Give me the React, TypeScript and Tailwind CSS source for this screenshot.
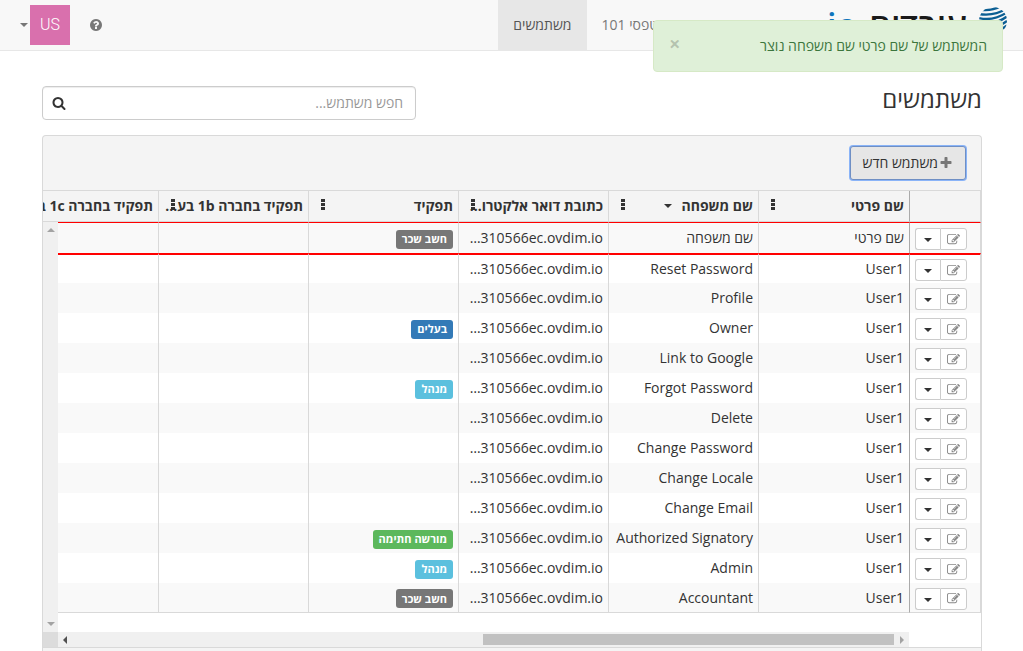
import type { ReactNode } from "react";

type Tone = "gray" | "blue" | "cyan" | "green";

interface Role {
  label: string;
  tone: Tone;
}

interface User {
  first: string;
  last: string;
  role?: Role;
}

const toneClass: Record<Tone, string> = {
  gray: "bg-[#777]",
  blue: "bg-[#337ab7]",
  cyan: "bg-[#5bc0de]",
  green: "bg-[#5cb85c]",
};

const EMAIL = "…310566ec.ovdim.io";

const users: User[] = [
  { first: "שם פרטי", last: "שם משפחה", role: { label: "חשב שכר", tone: "gray" } },
  { first: "User1", last: "Reset Password" },
  { first: "User1", last: "Profile" },
  { first: "User1", last: "Owner", role: { label: "בעלים", tone: "blue" } },
  { first: "User1", last: "Link to Google" },
  { first: "User1", last: "Forgot Password", role: { label: "מנהל", tone: "cyan" } },
  { first: "User1", last: "Delete" },
  { first: "User1", last: "Change Password" },
  { first: "User1", last: "Change Locale" },
  { first: "User1", last: "Change Email" },
  { first: "User1", last: "Authorized Signatory", role: { label: "מורשה חתימה", tone: "green" } },
  { first: "User1", last: "Admin", role: { label: "מנהל", tone: "cyan" } },
  { first: "User1", last: "Accountant", role: { label: "חשב שכר", tone: "gray" } },
];

const columns = [
  { title: "שם פרטי" },
  { title: "שם משפחה", sorted: true },
  { title: "כתובת דואר אלקטרו…" },
  { title: "תפקיד" },
  { title: "תפקיד בחברה 1b בע…" },
  { title: "תפקיד בחברה 1c בע…" },
];

const icons = {
  search:
    "M1216 832q0-185-131.5-316.5t-316.5-131.5-316.5 131.5-131.5 316.5 131.5 316.5 316.5 131.5 316.5-131.5 131.5-316.5zm512 832q0 52-38 90t-90 38q-54 0-90-38l-343-342q-179 124-399 124-143 0-273.5-55.5t-225-150-150-225-55.5-273.5 55.5-273.5 150-225 225-150 273.5-55.5 273.5 55.5 225 150 150 225 55.5 273.5q0 220-124 399l343 343q37 37 37 90z",
  question:
    "M1024 1376v-192q0-14-9-23t-23-9h-192q-14 0-23 9t-9 23v192q0 14 9 23t23 9h192q14 0 23-9t9-23zm256-672q0-88-55.5-163t-138.5-116-170-41q-243 0-371 213-15 24 8 42l132 100q7 6 19 6 16 0 25-12 53-68 86-92 34-24 86-24 48 0 85.5 26t37.5 59q0 38-20 61t-68 45q-63 28-115.5 86.5t-52.5 125.5v36q0 14 9 23t23 9h192q14 0 23-9t9-23q0-19 21.5-49.5t54.5-49.5q32-18 49-28.5t46-35 44.5-48 28-60.5 12.5-81zm384 192q0 209-103 385.5t-279.5 279.5-385.5 103-385.5-103-279.5-279.5-103-385.5 103-385.5 279.5-279.5 385.5-103 385.5 103 279.5 279.5 103 385.5z",
  plus: "M1600 736v192q0 40-28 68t-68 28h-416v416q0 40-28 68t-68 28h-192q-40 0-68-28t-28-68v-416h-416q-40 0-68-28t-28-68v-192q0-40 28-68t68-28h416v-416q0-40 28-68t68-28h192q40 0 68 28t28 68v416h416q40 0 68 28t28 68z",
  edit: "M888 1184l116-116-152-152-116 116v56h96v96h56zm440-720q-16-16-33 1l-350 350q-17 17-1 33t33-1l350-350q17-17 1-33zm80 594v190q0 119-84.5 203.5t-203.5 84.5h-832q-119 0-203.5-84.5t-84.5-203.5v-832q0-119 84.5-203.5t203.5-84.5h832q63 0 117 25 15 7 18 23 3 17-9 29l-49 49q-14 14-32 8-23-6-45-6h-832q-66 0-113 47t-47 113v832q0 66 47 113t113 47h832q66 0 113-47t47-113v-126q0-13 9-22l64-64q15-15 35-7t20 29zm-96-738l288 288-672 672h-288v-288zm444 132l-92 92-288-288 92-92q28-28 68-28t68 28l152 152q28 28 28 68t-28 68z",
};

function Icon({ name, className }: { name: keyof typeof icons; className: string }) {
  return (
    <svg viewBox="0 0 1792 1792" fill="currentColor" aria-hidden="true" className={className}>
      <path d={icons[name]} />
    </svg>
  );
}

function Caret() {
  return (
    <svg viewBox="0 0 8 4" fill="currentColor" aria-hidden="true" className="h-1 w-2">
      <path d="M0 0h8L4 4z" />
    </svg>
  );
}

function Logo() {
  return (
    <a href="#" aria-label="עובדים io" className="flex h-[50px] w-[350px] items-center gap-3 px-4">
      <svg viewBox="0 0 28 36" className="h-9 w-7">
        <clipPath id="globe">
          <circle cx="14" cy="14" r="14" />
        </clipPath>
        <g clipPath="url(#globe)" fill="none" stroke="#0c5f93" strokeWidth="2.3">
          <path d="M3 3Q14 4 24-2" />
          <path d="M0 7Q15 9.500 28 1.500" />
          <path d="M0 11Q14 14.500 28 5.500" />
          <path d="M0 15Q14 19.500 28 9.500" />
          <path d="M0 19Q14 24.500 28 14" />
          <path d="M0 23Q14 29.500 28 18.500" />
        </g>
      </svg>
      <span className="text-[34px] leading-none font-semibold text-[#1a1a1a]">עובדים</span>
      <span className="text-[34px] leading-none font-semibold text-[#0f75bc]">io</span>
    </a>
  );
}

function Navbar() {
  return (
    <header className="flex h-[51px] border-b border-[#e7e7e7] bg-[#f8f8f8] text-[#777]">
      <Logo />
      <nav className="flex">
        <a href="#" className="flex items-center px-[15px]">טפסי 101</a>
        <a href="#" className="flex items-center bg-[#e7e7e7] px-[15px] text-[#555]">משתמשים</a>
      </nav>
      <div className="ms-auto flex items-center">
        <button type="button" aria-label="עזרה" className="me-[19px]">
          <Icon name="question" className="h-[14px] w-[14px]" />
        </button>
        <button type="button" className="flex items-center gap-0.5 pe-5">
          <span className="flex h-10 w-10 items-center justify-center bg-[#d970ad] font-['Roboto','Open_Sans',sans-serif] text-base font-light text-white">
            US
          </span>
          <Caret />
        </button>
      </div>
    </header>
  );
}

function Toast({ children }: { children: ReactNode }) {
  return (
    <div
      role="alert"
      className="fixed top-5 right-5 flex h-[52px] w-[350px] items-center justify-between rounded border border-[#d6e9c6] bg-[#dff0d8] px-[15px] text-[#3c763d]"
    >
      <span>{children}</span>
      <button type="button" aria-label="סגור" className="pb-1 text-xl leading-none font-bold text-black/20">
        ×
      </button>
    </div>
  );
}

function HeaderCell({ title, sorted }: { title: string; sorted?: boolean }) {
  return (
    <th className="relative h-[31px] border-b border-l border-[#d9d9d9] bg-[#f4f4f4] p-0 ps-[5px] text-start font-bold">
      <span className="flex items-center gap-[10px] whitespace-nowrap">
        {title}
        {sorted ? <Caret /> : null}
      </span>
      <button type="button" aria-label="תפריט עמודה" className="absolute top-2 left-3">
        <svg viewBox="0 0 4 11" fill="currentColor" className="h-[11px] w-1">
          <path d="M0 0h4v3H0zM0 4h4v3H0zM0 8h4v3H0z" />
        </svg>
      </button>
    </th>
  );
}

function UserRow({ user, index }: { user: User; index: number }) {
  // the freshly created user is framed in red
  const edge =
    index === 0
      ? "h-[31px] border-t border-t-[#f00]"
      : index === 1
        ? "h-[30px] border-t-2 border-t-[#f00]"
        : index === users.length - 1
          ? "h-[30px] border-b border-b-[#d9d9d9]"
          : "h-[30px]";
  const cell = `border-l border-l-[#d9d9d9] p-0 ps-[5px] leading-5 whitespace-nowrap ${edge}`;

  return (
    <tr className={index % 2 ? "bg-white" : "bg-[#f9f9f9]"}>
      <td className={`border-r border-r-[#d9d9d9] border-l border-l-[#aaa] p-0 ps-[13px] pt-0.5 ${edge}`}>
        <div className="flex h-[22px]">
          <button
            type="button"
            aria-label="ערוך"
            className="flex w-[27px] items-center justify-center rounded-r-[3px] border border-[#ccc] bg-white text-[#888]"
          >
            <Icon name="edit" className="h-[13px] w-[13px]" />
          </button>
          <button
            type="button"
            aria-label="פעולות נוספות"
            className="flex w-[25px] items-center justify-center rounded-l-[3px] border border-r-0 border-[#ccc] bg-white pt-0.5"
          >
            <Caret />
          </button>
        </div>
      </td>
      <td className={cell}>{user.first}</td>
      <td className={cell}>{user.last}</td>
      <td className={cell}>
        <span dir="ltr">{EMAIL}</span>
      </td>
      <td className={`${cell} pt-0.5`}>
        {user.role ? (
          <span
            className={`flex h-[19px] w-fit items-center rounded-[3px] px-[6px] text-[11px] font-bold text-white ${toneClass[user.role.tone]}`}
          >
            {user.role.label}
          </span>
        ) : null}
      </td>
      <td className={cell} />
      <td className={cell} />
    </tr>
  );
}

function UsersGrid() {
  return (
    <div className="relative overflow-hidden bg-white">
      <table className="w-[973px] table-fixed border-separate border-spacing-0">
        <colgroup>
          <col className="w-[72px]" />
          <col className="w-[151px]" />
          <col className="w-[150px]" />
          <col className="w-[150px]" />
          <col className="w-[150px]" />
          <col className="w-[150px]" />
          <col className="w-[150px]" />
        </colgroup>
        <thead>
          <tr>
            <td className="border-r border-b border-l border-[#d9d9d9] border-l-[#aaa] bg-[#f4f4f4] p-0" />
            {columns.map((column) => (
              <HeaderCell key={column.title} {...column} />
            ))}
          </tr>
        </thead>
        <tbody>
          {users.map((user, index) => (
            <UserRow key={user.last} user={user} index={index} />
          ))}
        </tbody>
      </table>

      <div className="mt-[19px] flex h-[15px] ps-[72px]">
        <div className="flex flex-1 items-center bg-[#f0f0f0] text-[#505050]">
          <svg viewBox="0 0 15 15" className="h-[15px] w-[15px]" fill="#a3a3a3">
            <path d="M6 4l4 4-4 4z" />
          </svg>
          <div className="h-[11px] w-[411px] bg-[#c1c1c1]" />
          <svg viewBox="0 0 15 15" className="ms-auto h-[15px] w-[15px]" fill="currentColor">
            <path d="M9 4L5 8l4 4z" />
          </svg>
        </div>
        <div className="w-[15px] bg-[#dcdcdc]" />
      </div>

      {/* vertical scrollbar sits over the rows */}
      <div className="absolute top-[31px] bottom-[15px] left-0 flex w-[15px] flex-col justify-between bg-[#f0f0f0]">
        <svg viewBox="0 0 15 15" className="h-[15px] w-[15px]" fill="#a3a3a3">
          <path d="M4 10l4-4 4 4z" />
        </svg>
        <svg viewBox="0 0 15 15" className="h-[15px] w-[15px]" fill="#a3a3a3">
          <path d="M4 5l4 4 4-4z" />
        </svg>
      </div>
    </div>
  );
}

export default function App() {
  return (
    <div
      dir="rtl"
      className="h-screen overflow-hidden bg-white font-['Open_Sans','Noto_Sans',sans-serif] text-sm leading-5 text-[#333]"
    >
      <Navbar />
      <main className="ps-[41px] pe-[42px] pt-[35px]">
        <div className="flex justify-between">
          <h1 className="text-2xl leading-[26px]">משתמשים</h1>
          <label className="flex h-[34px] w-[374px] items-center rounded border border-[#ccc] ps-3 pe-[9px] shadow-[inset_0_1px_1px_rgba(0,0,0,0.075)]">
            <input
              type="text"
              aria-label="חפש משתמש"
              placeholder="חפש משתמש..."
              className="min-w-0 flex-1 outline-none placeholder:text-[#999]"
            />
            <Icon name="search" className="h-[14px] w-[14px]" />
          </label>
        </div>

        <section className="mt-[15px] overflow-hidden rounded-t border border-b-0 border-[#d9d9d9] bg-[#f4f4f4]">
          <div className="flex h-[55px] items-start border-b border-[#d9d9d9] px-[15px] pt-[10px]">
            <button
              type="button"
              className="flex h-[34px] items-center gap-px rounded-[3px] border border-[#6f8fc4] bg-[#e6e6e6] px-3 ring-1 ring-[#8ab4f8]"
            >
              <Icon name="plus" className="h-[14px] w-[14px] text-[#777]" />
              משתמש חדש
            </button>
          </div>
          <UsersGrid />
          <div className="h-10 border-t border-[#d9d9d9]" />
        </section>
      </main>
      <Toast>המשתמש של שם פרטי שם משפחה נוצר</Toast>
    </div>
  );
}
